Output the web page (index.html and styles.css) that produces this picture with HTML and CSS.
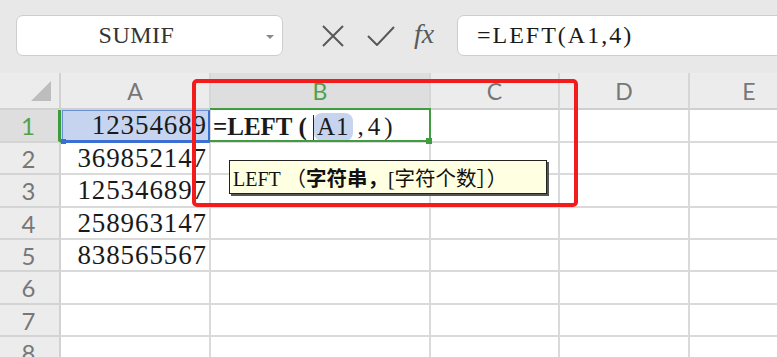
FILE: index.html
```html
<!DOCTYPE html>
<html lang="zh">
<head>
<meta charset="utf-8">
<link rel="stylesheet" href="styles.css">
</head>
<body>
<div class="app">
  <div class="toolbar">
    <div class="namebox">
      <span class="name">SUMIF</span>
      <span class="drop"></span>
    </div>
    <div class="tools">
      <svg class="ico" width="24" height="22" viewBox="0 0 24 22"><path d="M2 1 L22 21 M22 1 L2 21" stroke="#585858" stroke-width="2" fill="none"/></svg>
      <svg class="ico" width="28" height="20" viewBox="0 0 28 20"><path d="M1 10 L10 19 L27 1" stroke="#585858" stroke-width="2" fill="none"/></svg>
      <span class="fx">fx</span>
    </div>
    <div class="formula">=LEFT(A1,4)</div>
  </div>

  <div class="sheet">
    <div class="corner"><svg width="22" height="22" viewBox="0 0 22 22"><path d="M21 1 L21 21 L1 21 Z" fill="#bdbdbd"/></svg></div>
    <div class="ch">A</div>
    <div class="ch active">B</div>
    <div class="ch">C</div>
    <div class="ch">D</div>
    <div class="ch">E</div>

    <div class="rh active">1</div>
    <div class="c num ref">12354689</div>
    <div class="c edit"><span class="b">=LEFT</span><span class="b paren">(</span><span class="caret"></span><span class="refarg">A1</span><span class="rest">,4)</span></div>
    <div class="c"></div><div class="c"></div><div class="c"></div>

    <div class="rh">2</div>
    <div class="c num">369852147</div>
    <div class="c"></div><div class="c"></div><div class="c"></div><div class="c"></div>

    <div class="rh">3</div>
    <div class="c num">125346897</div>
    <div class="c"></div><div class="c"></div><div class="c"></div><div class="c"></div>

    <div class="rh">4</div>
    <div class="c num">258963147</div>
    <div class="c"></div><div class="c"></div><div class="c"></div><div class="c"></div>

    <div class="rh">5</div>
    <div class="c num">838565567</div>
    <div class="c"></div><div class="c"></div><div class="c"></div><div class="c"></div>

    <div class="rh">6</div>
    <div class="c"></div><div class="c"></div><div class="c"></div><div class="c"></div><div class="c"></div>

    <div class="rh">7</div>
    <div class="c"></div><div class="c"></div><div class="c"></div><div class="c"></div><div class="c"></div>

    <div class="rh">8</div>
    <div class="c"></div><div class="c"></div><div class="c"></div><div class="c"></div><div class="c"></div>

    <div class="tip"><span class="lat">LEFT</span> <span class="cjk">（<b>字符串，</b></span><span class="lat">[</span><span class="cjk">字符个数］）</span></div>
    <div class="redbox"></div>
  </div>
</div>
</body>
</html>
```
FILE: styles.css
```css
* { box-sizing: border-box; }
html, body { margin: 0; padding: 0; }
body {
  width: 777px;
  height: 357px;
  overflow: hidden;
  background: #ffffff;
}
.app { width: 777px; height: 357px; overflow: hidden; }

.toolbar {
  height: 73px;
  background: #e8e8e8;
  display: flex;
  align-items: flex-start;
  padding-top: 15px;
  padding-left: 16px;
}
.namebox {
  width: 267px;
  height: 41px;
  background: #fff;
  border: 1px solid #cdcdcd;
  border-radius: 7px;
  display: flex;
  align-items: center;
  position: relative;
}
.name {
  flex: 1;
  text-align: center;
  padding-right: 26px;
  font-family: "Liberation Serif", serif;
  font-size: 24px;
  letter-spacing: 0.5px;
  color: #333;
}
.drop {
  position: absolute;
  right: 8px;
  top: 19px;
  width: 0; height: 0;
  border-left: 4px solid transparent;
  border-right: 4px solid transparent;
  border-top: 4px solid #8a8a8a;
}
.tools {
  width: 174px;
  height: 41px;
  display: flex;
  align-items: center;
  padding-left: 38px;
}
.tools .ico:first-child { margin-right: 22px; margin-top: 1px; }
.tools .ico:nth-child(2) { margin-right: 19px; }
.fx {
  font-family: "Liberation Serif", serif;
  font-style: italic;
  font-size: 28px;
  color: #5a5a5a;
  line-height: 1;
  margin-top: -4px;
}
.formula {
  flex: 1;
  height: 41px;
  margin-right: -20px;
  background: #fff;
  border: 1px solid #cdcdcd;
  border-radius: 7px;
  padding-left: 19px;
  font-family: "Liberation Serif", serif;
  font-size: 24px;
  letter-spacing: 2px;
  line-height: 39px;
  color: #1a1a1a;
}

.sheet {
  position: relative;
  display: grid;
  grid-template-columns: 61px 150px 220px 129px 130px 120px;
  grid-template-rows: 37px 33px 32px 33px 32px 32px 33px 32px 33px;
  font-family: "Liberation Serif", serif;
}
.corner {
  background: #ececec;
  border-right: 2px solid #d2d2d2;
  border-bottom: 2px solid #d2d2d2;
  display: flex;
  align-items: flex-end;
  justify-content: flex-end;
  padding: 0 7px 6px 0;
}
.ch {
  background: #ececec;
  border-right: 2px solid #d6d6d6;
  border-bottom: 2px solid #cfcfcf;
  font-family: Lato, "Liberation Sans", sans-serif;
  font-size: 23px;
  color: #777;
  display: flex;
  align-items: center;
  justify-content: center;
  padding-top: 1px;
}
.ch.active { background: #dedede; color: #4fa24a; }
.rh {
  background: #ececec;
  border-right: 2px solid #d2d2d2;
  border-bottom: 2px solid #d4d4d4;
  font-family: Lato, "Liberation Sans", sans-serif;
  font-size: 24px;
  color: #777;
  display: flex;
  align-items: center;
  justify-content: center;
  padding-right: 2px;
}
.rh.active { background: #dedede; color: #4fa24a; border-right: 3px solid #3c9c3c; }
.c {
  position: relative;
  border-right: 2px solid #dadada;
  border-bottom: 2px solid #dadada;
  font-size: 24px;
  color: #1a1a1a;
  display: flex;
  align-items: center;
  white-space: nowrap;
}
.num {
  justify-content: flex-end;
  padding-right: 2px;
  font-size: 27px;
  letter-spacing: 0.9px;
}
.ref { background: #c6d4ef; }
.ref::after {
  content: "";
  position: absolute;
  left: 1px; top: 0; right: -1px; bottom: -2px;
  border: 1px solid #6b8fd8;
  border-bottom: 3px solid #3b6fd4;
  border-right: 2px solid #3b6fd4;
}
.ref::before {
  content: "";
  position: absolute;
  left: 0; bottom: -3px;
  width: 5px; height: 5px;
  background: #3b6fd4;
  z-index: 2;
}
.edit {
  padding-left: 2px;
  padding-top: 3px;
  overflow: visible;
  z-index: 1;
}
.edit::after {
  content: "";
  position: absolute;
  left: -1px; top: -2px; right: -2px; bottom: -1px;
  border: 2px solid #3f9d3f;
  border-left: none;
  pointer-events: none;
}
.edit::before {
  content: "";
  position: absolute;
  right: -3px; bottom: -3px;
  width: 6px; height: 6px;
  background: #3f9d3f;
}
.b { font-weight: bold; font-size: 25px; }
.paren { padding-left: 6px; }
.caret {
  display: inline-block;
  width: 1px;
  height: 25px;
  background: #222;
  margin-left: 6px;
}
.refarg {
  background: #c6d4ef;
  border-radius: 8px;
  padding: 0 4px 0 3px;
  margin-right: 4px;
  font-size: 25px;
  letter-spacing: 1px;
}
.rest { font-size: 25px; letter-spacing: 4px; }

.tip {
  position: absolute;
  left: 229px;
  top: 87px;
  width: 318px;
  height: 34px;
  background: #ffffe1;
  border: 1px solid #222;
  box-shadow: 2px 2px 0 #555;
  font-family: "Liberation Serif", serif;
  font-size: 20px;
  line-height: 32px;
  padding-left: 3px;
  color: #111;
  white-space: nowrap;
  z-index: 3;
}
.tip .lat { font-size: 20px; }
.tip .cjk { font-family: "Noto Sans CJK SC", sans-serif; font-size: 20.5px; }
.tip b { font-weight: bold; }
.redbox {
  position: absolute;
  left: 192px;
  top: 6px;
  width: 386px;
  height: 128px;
  border: 4px solid #f21c1c;
  border-radius: 5px;
  z-index: 4;
  pointer-events: none;
}
```
